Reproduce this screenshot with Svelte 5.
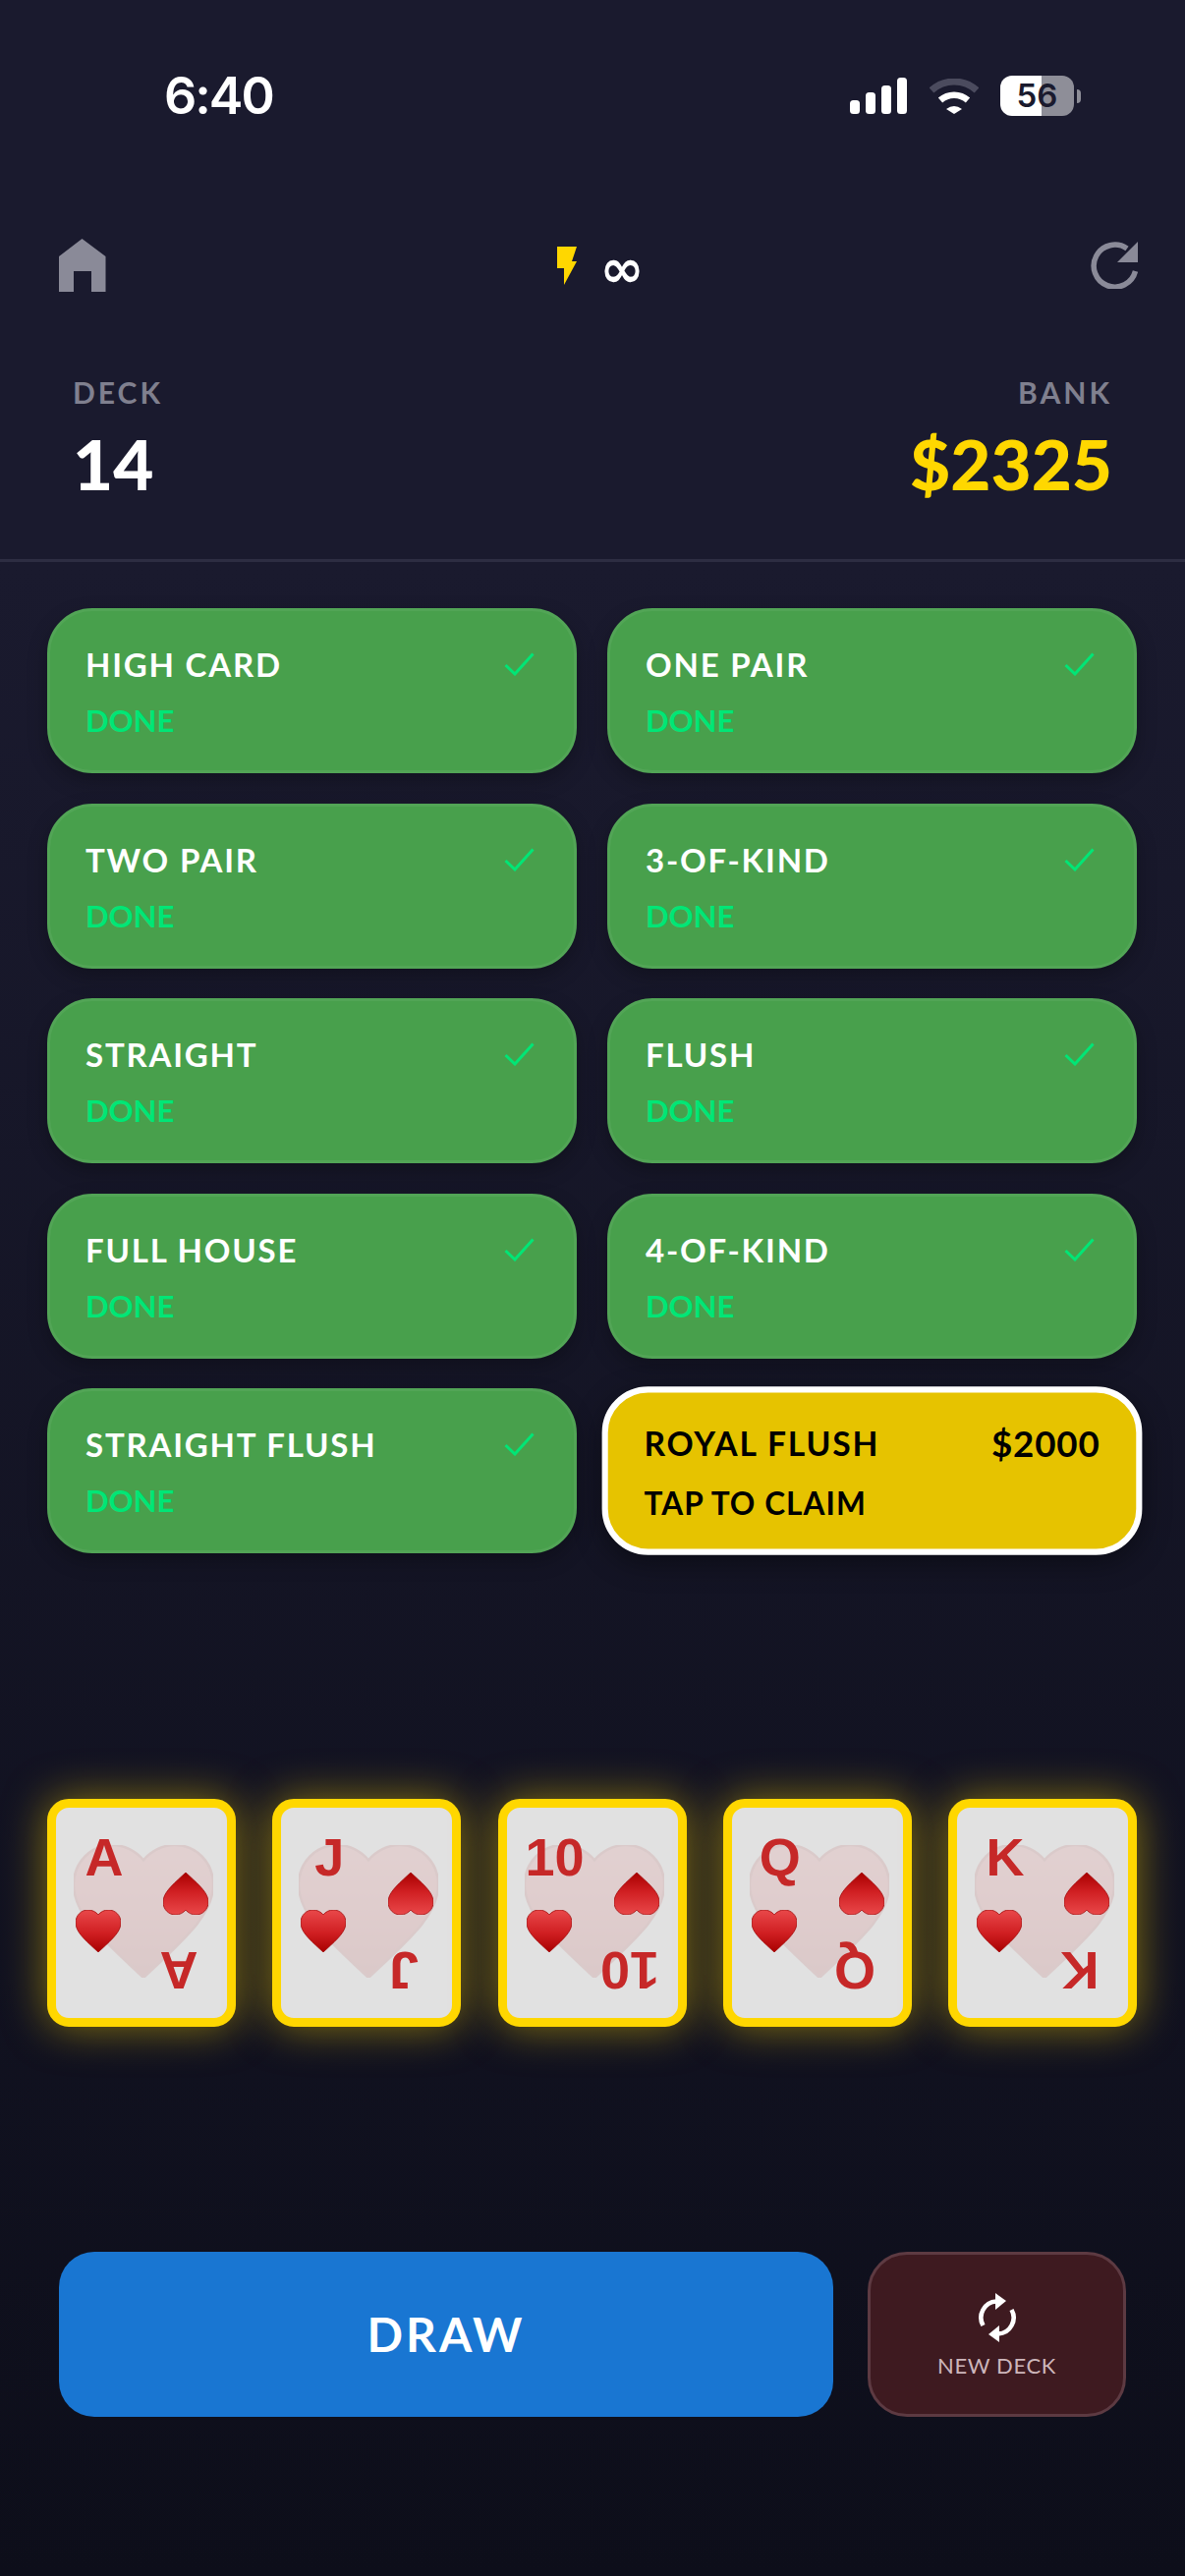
<script lang="ts">
  const hands = [
    "HIGH CARD",
    "ONE PAIR",
    "TWO PAIR",
    "3-OF-KIND",
    "STRAIGHT",
    "FLUSH",
    "FULL HOUSE",
    "4-OF-KIND",
    "STRAIGHT FLUSH",
  ];
  const ranks = ["A", "J", "10", "Q", "K"];
</script>

{#snippet heart(cls: string, id: string)}
  <svg class={cls} viewBox="2 3 20 18.35" preserveAspectRatio="none" aria-hidden="true">
    <defs>
      <linearGradient {id} x1="0" y1="0" x2="0" y2="1">
        <stop offset="0" stop-color="#e9484a" />
        <stop offset="0.55" stop-color="#d01f22" />
        <stop offset="1" stop-color="#a80000" />
      </linearGradient>
    </defs>
    <path
      d="M12 21.35l-1.45-1.32C5.4 15.36 2 12.28 2 8.5 2 5.42 4.42 3 7.5 3c1.74 0 3.41.81 4.5 2.09C13.09 3.81 14.76 3 16.5 3 19.58 3 22 5.42 22 8.5c0 3.78-3.4 6.86-8.55 11.54L12 21.35z"
      fill={`url(#${id})`}
      stroke="#a30d0d"
      stroke-width="0.35"
    />
  </svg>
{/snippet}

<div class="page">
  <div class="status">
    <span class="time">6:40</span>
    <div class="status-icons">
      <svg class="signal" viewBox="0 0 58 37" aria-hidden="true">
        <rect x="0" y="23" width="10" height="14" rx="3.5" />
        <rect x="16" y="15" width="10" height="22" rx="3.5" />
        <rect x="32" y="8" width="10" height="29" rx="3.5" />
        <rect x="48" y="0" width="10" height="37" rx="3.5" />
      </svg>
      <svg class="wifi" viewBox="0 0 50 36" aria-hidden="true">
        <path d="M2 12 A34 34 0 0 1 48 12" fill="none" stroke="#4b4b5e" stroke-width="7" />
        <path d="M11 22 A21 21 0 0 1 39 22" fill="none" stroke="#fff" stroke-width="6.5" />
        <path d="M17 31 Q25 25 33 31 L25 36 Z" fill="#fff" />
      </svg>
      <div class="battery">
        <div class="battery-body"><span>56</span></div>
        <div class="battery-nub"></div>
      </div>
    </div>
  </div>

  <div class="topbar">
    <svg class="home" viewBox="0 0 48 54" aria-hidden="true">
      <path d="M23.5 0 L47.5 18 V54 H33 V33 H15 V54 H0 V18 Z" fill="#8a8a98" />
    </svg>
    <div class="energy">
      <svg class="bolt" viewBox="0 0 20 39" aria-hidden="true">
        <path d="M0 0 H20 L15 15 H20 L7 39 V22 H0 Z" fill="#ffd700" />
      </svg>
      <span class="infinity">∞</span>
    </div>
    <svg class="redo" viewBox="0 0 49 48" aria-hidden="true">
      <path d="M45.5 30 A21.5 21.5 0 1 1 37 7" fill="none" stroke="#8a8a98" stroke-width="5.5" />
      <path d="M48 0 V21 H27 Z" fill="#8a8a98" />
    </svg>
  </div>

  <div class="stats">
    <div class="stat">
      <span class="stat-label">DECK</span>
      <span class="stat-value">14</span>
    </div>
    <div class="stat stat-right">
      <span class="stat-label">BANK</span>
      <span class="stat-value gold">$2325</span>
    </div>
  </div>

  <div class="goals">
    {#each hands as hand}
      <div class="goal">
        <div class="goal-top">
          <span class="goal-name">{hand}</span>
          <svg class="check" viewBox="0 0 31 24" aria-hidden="true">
            <path d="M1.5 13 L11 22 L29.5 1.5" fill="none" stroke="#00e676" stroke-width="3" />
          </svg>
        </div>
        <span class="goal-state">DONE</span>
      </div>
    {/each}
    <div class="goal claim">
      <div class="goal-top">
        <span class="goal-name">ROYAL FLUSH</span>
        <span class="prize">$2000</span>
      </div>
      <span class="goal-state">TAP TO CLAIM</span>
    </div>
  </div>

  <div class="hand">
    {#each ranks as rank, i}
      <div class="card">
        {@render heart("big-heart", `big${i}`)}
        <span class="rank">{rank}</span>
        {@render heart("small-heart low", `low${i}`)}
        {@render heart("small-heart flip", `flip${i}`)}
        <span class="rank rank-flip">{rank}</span>
      </div>
    {/each}
  </div>

  <div class="actions">
    <button class="draw" type="button">DRAW</button>
    <button class="new-deck" type="button">
      <svg class="cycle" viewBox="0 0 40 56" aria-hidden="true">
        <path d="M5.5 36 A16.5 16.5 0 0 1 19 11.5" fill="none" stroke="#fff" stroke-width="4.6" />
        <path d="M18 3 L29 11 L18 20 Z" fill="#fff" />
        <g transform="rotate(180 20 28)">
          <path d="M5.5 36 A16.5 16.5 0 0 1 19 11.5" fill="none" stroke="#fff" stroke-width="4.6" />
          <path d="M18 3 L29 11 L18 20 Z" fill="#fff" />
        </g>
      </svg>
      <span>NEW DECK</span>
    </button>
  </div>
</div>

<style>
  :global(body) {
    margin: 0;
    background: #0d0e1a;
  }

  .page {
    width: 1206px;
    height: 2622px;
    overflow: hidden;
    display: flex;
    flex-direction: column;
    background: linear-gradient(180deg, #1a1a2e 0%, #1a1a2e 22%, #0d0e1a 100%);
    font-family: "Lato", "Noto Sans", sans-serif;
    color: #fff;
  }

  .status {
    height: 41px;
    margin-top: 77px;
    padding: 0 106px 0 167px;
    display: flex;
    align-items: center;
    justify-content: space-between;
  }

  .time {
    font-family: "Inter", sans-serif;
    font-size: 52px;
    font-weight: 600;
    line-height: 1;
    letter-spacing: -2px;
  }

  .status-icons {
    display: flex;
    align-items: center;
  }

  .signal {
    width: 58px;
    height: 37px;
    fill: #fff;
  }

  .wifi {
    width: 50px;
    height: 36px;
    margin-left: 23px;
  }

  .battery {
    display: flex;
    align-items: center;
    margin-left: 22px;
  }

  .battery-body {
    width: 75px;
    height: 41px;
    border-radius: 12px;
    background: linear-gradient(90deg, #fff 0 56%, #8e8e98 56% 100%);
    display: flex;
    align-items: center;
    justify-content: center;
    color: #1a1a2e;
    font-family: "Inter", sans-serif;
    font-size: 33px;
    font-weight: 600;
    line-height: 1;
  }

  .battery-nub {
    width: 4px;
    height: 14px;
    margin-left: 3px;
    border-radius: 0 4px 4px 0;
    background: #8e8e98;
  }

  .topbar {
    height: 54px;
    margin-top: 125px;
    padding: 0 47px 0 60px;
    display: flex;
    align-items: center;
    justify-content: space-between;
  }

  .home {
    width: 48px;
    height: 54px;
  }

  .energy {
    display: flex;
    align-items: center;
    gap: 24px;
  }

  .bolt {
    width: 20px;
    height: 39px;
  }

  .infinity {
    font-family: "DejaVu Sans", sans-serif;
    font-size: 54px;
    font-weight: 700;
    line-height: 40px;
    width: 41px;
    text-align: center;
    padding-top: 8px;
  }

  .redo {
    width: 49px;
    height: 48px;
  }

  .stats {
    height: 185px;
    margin-top: 87px;
    padding: 0 74px 0 74px;
    display: flex;
    justify-content: space-between;
    border-bottom: 3px solid #2d2d42;
  }

  .stat {
    display: flex;
    flex-direction: column;
    gap: 22px;
  }

  .stat-right {
    align-items: flex-end;
  }

  .stat-label {
    font-size: 30px;
    font-weight: 700;
    line-height: 30px;
    letter-spacing: 3px;
    color: #80808f;
  }

  .stat-value {
    font-size: 71px;
    font-weight: 900;
    line-height: 72px;
  }

  .gold {
    color: #ffd700;
  }

  .goals {
    margin-top: 47px;
    padding: 0 49px 0 48px;
    display: grid;
    grid-template-columns: 1fr 1fr;
    grid-auto-rows: 168px;
    column-gap: 31px;
    row-gap: 30.5px;
  }

  .goal {
    box-sizing: border-box;
    padding: 39px 36px 0 36px;
    border: 3px solid #52a556;
    border-radius: 46px;
    background: #48a04c;
    box-shadow: 0 8px 20px rgba(0, 0, 0, 0.25);
    display: flex;
    flex-direction: column;
    gap: 27px;
  }

  .goal-top {
    height: 30px;
    display: flex;
    align-items: center;
    justify-content: space-between;
  }

  .goal-name {
    font-size: 33px;
    font-weight: 700;
    line-height: 30px;
    letter-spacing: 1.8px;
  }

  .check {
    width: 31px;
    height: 24px;
    margin-right: 4px;
  }

  .goal-state {
    font-size: 31px;
    font-weight: 700;
    line-height: 30px;
    color: #00e676;
  }

  .claim {
    border: 6px solid #fff;
    background: #e6c300;
    color: #000;
    padding: 35px 36px 0 36px;
    gap: 30px;
    transform: scale(1.02);
    box-shadow: 0 8px 28px rgba(0, 0, 0, 0.4);
  }

  .claim .goal-state {
    color: #000;
    font-size: 31px;
    letter-spacing: 1px;
  }

  .prize {
    font-size: 36px;
    font-weight: 700;
    line-height: 30px;
    letter-spacing: 0.8px;
  }

  .hand {
    margin-top: 250px;
    padding: 0 49px 0 48px;
    display: flex;
    justify-content: space-between;
  }

  .card {
    position: relative;
    box-sizing: border-box;
    width: 192px;
    height: 232px;
    border: 9px solid #ffd700;
    border-radius: 22px;
    background: #e1e1e1;
    box-shadow: 0 0 44px rgba(255, 215, 0, 0.5);
  }

  .card :global(svg) {
    position: absolute;
  }

  .big-heart {
    left: 18px;
    top: 38px;
    width: 142px;
    height: 135px;
    opacity: 0.1;
  }

  .small-heart {
    width: 46px;
    height: 43px;
  }

  .low {
    left: 20px;
    top: 104px;
  }

  .flip {
    left: 109px;
    top: 66px;
    transform: rotate(180deg);
  }

  .rank {
    position: absolute;
    left: 18px;
    top: 23px;
    width: 62px;
    text-align: center;
    font-family: "Liberation Sans", sans-serif;
    font-size: 54px;
    font-weight: 700;
    line-height: 54px;
    color: #c62828;
  }

  .rank-flip {
    left: auto;
    top: auto;
    right: 18px;
    bottom: 21px;
    transform: rotate(180deg);
  }

  .actions {
    margin-top: 229px;
    padding: 0 60px;
    display: flex;
    justify-content: space-between;
  }

  .draw {
    width: 788px;
    height: 168px;
    border: 0;
    border-radius: 36px;
    background: #1976d2;
    color: #fff;
    font-family: "Lato", sans-serif;
    font-size: 48px;
    font-weight: 700;
    letter-spacing: 3px;
    padding: 0 0 2px;
  }

  .new-deck {
    box-sizing: border-box;
    width: 263px;
    height: 168px;
    padding: 36px 0 0;
    border: 3px solid #5d3a42;
    border-radius: 40px;
    background: #3e1a20;
    color: #cdb6bb;
    font-family: "Lato", sans-serif;
    font-size: 22px;
    letter-spacing: 0.6px;
    display: flex;
    flex-direction: column;
    align-items: center;
    gap: 7px;
  }

  .cycle {
    width: 40px;
    height: 56px;
  }
</style>
